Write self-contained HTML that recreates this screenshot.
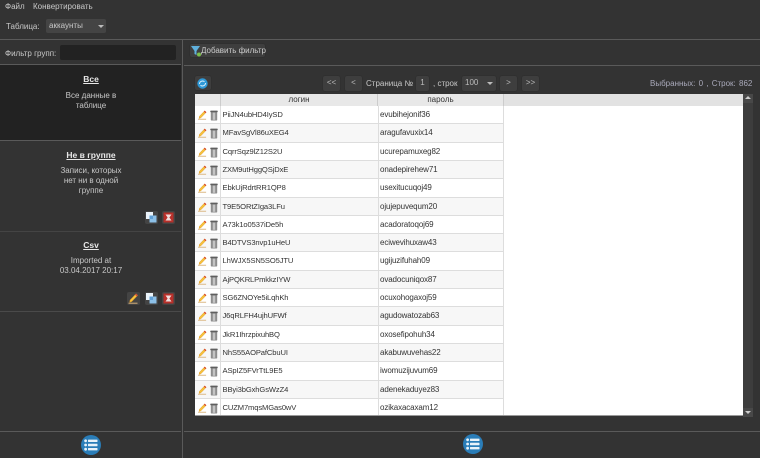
<!DOCTYPE html>
<html><head><meta charset="utf-8"><style>
html,body{margin:0;padding:0;background:#333;}
body{width:760px;height:458px;overflow:hidden;position:relative;font:8px/11px "Liberation Sans",sans-serif;color:#c8c8c8;}
.a{position:absolute;white-space:nowrap;}
.l{position:absolute;background:#5a5a5a;}
.btn{position:absolute;background:#3e3e3e;border-radius:2px;box-shadow:0 0 1px #222;text-align:center;color:#bbb;line-height:15px;height:15px;white-space:nowrap;}
.ctr{position:absolute;text-align:center;left:0;width:182px;color:#c8c8c8;line-height:10px;}
.t{font-weight:bold;text-decoration:underline;color:#e8e8e8;font-size:8.5px;}
.ib{position:absolute;width:13px;height:13px;background:#444;border-radius:2px;}
.ib svg{position:absolute;left:1px;top:1px;}
#tb{position:absolute;left:195px;top:94px;width:548px;height:322px;background:#fff;overflow:hidden;border-bottom:1px solid #999;box-sizing:border-box;}
#hd{position:absolute;left:0;top:0;width:548px;height:12px;background:#e2e2e2;}
.hc{position:absolute;top:0;height:12px;line-height:12px;text-align:center;color:#333;font-size:8px;border-right:1px solid #ccc;background:#e8e8e8;box-sizing:border-box;}
.r{position:absolute;left:0;width:309px;height:18.33px;border-bottom:1px solid #ddd;box-sizing:border-box;color:#333;font-size:8px;line-height:18px;}
.r:nth-child(even){background:#f7f7f7;}
.r i{position:absolute;top:0;bottom:0;width:1px;background:#ddd;}
.r span{position:absolute;top:0;letter-spacing:-.12px;}
.r span:first-of-type{left:27.5px!important;font-size:7.6px;letter-spacing:-.12px;}
.r svg{position:absolute;top:4px;}
</style></head><body>
<svg width="0" height="0" style="position:absolute"><defs>
<symbol id="pen" viewBox="0 0 10 11"><path d="M7.5 .8 9.2 2.4 3.2 8.6 1.2 9.2 1.6 7Z" fill="#f7c23c" stroke="#d9931f" stroke-width=".5"/><path d="M7.5 .8 9.2 2.4 8.2 3.4 6.5 1.8Z" fill="#d9453a"/><rect x="0" y="9.7" width="9" height="1" fill="#d8b27a"/></symbol>
<symbol id="bin" viewBox="0 0 8 11"><rect x=".8" y="1.8" width="6.4" height="8.7" rx=".8" fill="#8d8d8d"/><rect x="2.8" y="2.6" width="2.4" height="7.2" fill="#c4c4c4"/><rect x=".3" y=".6" width="7.4" height="1.6" rx=".6" fill="#5f5f5f"/></symbol>
<symbol id="cp" viewBox="0 0 11 11"><rect x="3.5" y="3.5" width="7" height="7" fill="#8cc0e8"/><rect x="0" y="0" width="7" height="7" fill="#eaf3fa"/><rect x="3.5" y="3.5" width="3.5" height="3.5" fill="#5f9fd6"/></symbol>
<symbol id="x" viewBox="0 0 11 11"><rect x=".5" y=".5" width="10" height="10" fill="#b8302a"/><path d="M2.5 2.5h6L6.4 5.5 8.5 8.5h-6L4.6 5.5Z" fill="#f0dede"/></symbol>
<symbol id="list" viewBox="0 0 20 20"><circle cx="10" cy="10" r="10" fill="#2a7db8"/><g fill="#e8f2f9"><circle cx="4.6" cy="5.8" r="1.4"/><circle cx="4.6" cy="10" r="1.4"/><circle cx="4.6" cy="14.2" r="1.4"/><rect x="7" y="4.6" width="9.5" height="2.4" rx=".5"/><rect x="7" y="8.8" width="9.5" height="2.4" rx=".5"/><rect x="7" y="13" width="9.5" height="2.4" rx=".5"/></g></symbol>
</defs></svg>

<div class="a" style="left:5px;top:1px">Файл</div>
<div class="a" style="left:33px;top:1px">Конвертировать</div>
<div class="a" style="left:6px;top:21px">Таблица:</div>
<div class="a" style="left:46px;top:19px;width:60px;height:14px;background:#444;border-radius:2px;line-height:14px;text-indent:3px">аккаунты<div class="a" style="left:52px;top:6px;border:3px solid transparent;border-top:3px solid #bbb;"></div></div>

<div class="l" style="left:0;top:39px;width:760px;height:1px"></div>
<div class="l" style="left:182px;top:39px;width:1px;height:419px"></div>
<div class="l" style="left:0;top:64px;width:181px;height:1px"></div>
<div class="l" style="left:184px;top:65px;width:576px;height:1px"></div>

<div class="a" style="left:5px;top:48px">Фильтр групп:</div>
<div class="a" style="left:60px;top:45px;width:116px;height:15px;background:#222;border-radius:2px"></div>

<div class="btn" style="left:190px;top:44px;width:75px;text-align:left;height:13px;line-height:13px;color:#ccc"><svg width="11" height="11" viewBox="0 0 11 11" style="position:absolute;left:1px;top:2px"><path d="M0 0h9L5.5 5v4L3.5 8V5Z" fill="#5fb0dc"/><circle cx="8" cy="8.5" r="2" fill="#7cc04a"/></svg><span style="position:absolute;left:11px;white-space:nowrap">Добавить фильтр</span></div>

<div class="a" style="left:0;top:65px;width:181px;height:75px;background:#222"></div>
<div class="l" style="left:0;top:140px;width:181px;height:1px"></div>
<div class="ctr" style="top:74px"><span class="t">Все</span></div>
<div class="ctr" style="top:91px;">Все данные в<br>таблице</div>

<div class="ctr" style="top:150px"><span class="t">Не в группе</span></div>
<div class="ctr" style="top:166px">Записи, которых<br>нет ни в одной<br>группе</div>
<div class="ib" style="left:145px;top:211px"><svg width="11" height="11"><use href="#cp"/></svg></div>
<div class="ib" style="left:162px;top:211px"><svg width="11" height="11"><use href="#x"/></svg></div>
<div class="l" style="left:0;top:231px;width:181px;height:1px;background:#444"></div>

<div class="ctr" style="top:240px"><span class="t">Csv</span></div>
<div class="ctr" style="top:256px">Imported at<br>03.04.2017 20:17</div>
<div class="ib" style="left:127px;top:292px"><svg width="11" height="11"><use href="#pen"/></svg></div>
<div class="ib" style="left:145px;top:292px"><svg width="11" height="11"><use href="#cp"/></svg></div>
<div class="ib" style="left:162px;top:292px"><svg width="11" height="11"><use href="#x"/></svg></div>
<div class="l" style="left:0;top:311px;width:181px;height:1px;background:#4a4a4a"></div>

<div class="btn" style="left:195px;top:76px;width:16px;height:14px"><svg width="11" height="11" viewBox="0 0 11 11" style="position:absolute;left:2px;top:2px"><circle cx="5.5" cy="5.5" r="5.2" fill="#2f9ad8"/><path d="M2.5 6a3 3 0 0 1 5-2.2M8.5 5a3 3 0 0 1-5 2.2" stroke="#dff1fb" fill="none" stroke-width="1"/></svg></div>
<div class="btn" style="left:323px;top:76px;width:17px;line-height:14px">&lt;&lt;</div>
<div class="btn" style="left:345px;top:76px;width:17px;line-height:14px">&lt;</div>
<div class="a" style="left:366px;top:78px">Страница №</div>
<div class="btn" style="left:416px;top:76px;width:13px;line-height:14px">1</div>
<div class="a" style="left:433px;top:78px">, строк</div>
<div class="btn" style="left:462px;top:76px;width:34px;text-align:left;line-height:14px;text-indent:3px">100<div class="a" style="left:25px;top:6px;border:3px solid transparent;border-top:3px solid #bbb;"></div></div>
<div class="btn" style="left:500px;top:76px;width:17px;line-height:14px">&gt;</div>
<div class="btn" style="left:522px;top:76px;width:17px;line-height:14px">&gt;&gt;</div>
<div class="a" style="left:650px;top:78px;color:#aab;word-spacing:1px">Выбранных: 0 , Строк: 862</div>

<div id="tb">
<div id="hd"></div>
<div class="hc" style="left:0;width:26px"></div>
<div class="hc" style="left:26px;width:157px">логин</div>
<div class="hc" style="left:183px;width:126px">пароль</div>
<div style="position:absolute;left:0;top:12px;width:309px;height:310px">
<div class="r" style="top:0px"><svg style="left:3px" width="9" height="10"><use href="#pen"/></svg><svg style="left:15px" width="8" height="11"><use href="#bin"/></svg><i style="left:25px"></i><span style="left:28px">PiiJN4ubHD4IySD</span><i style="left:183px"></i><span style="left:185px">evubihejonif36</span><i style="left:308px"></i></div>
<div class="r" style="top:18.3px"><svg style="left:3px" width="9" height="10"><use href="#pen"/></svg><svg style="left:15px" width="8" height="11"><use href="#bin"/></svg><i style="left:25px"></i><span style="left:28px">MFavSgVl86uXEG4</span><i style="left:183px"></i><span style="left:185px">aragufavuxix14</span><i style="left:308px"></i></div>
<div class="r" style="top:36.6px"><svg style="left:3px" width="9" height="10"><use href="#pen"/></svg><svg style="left:15px" width="8" height="11"><use href="#bin"/></svg><i style="left:25px"></i><span style="left:28px">CqrrSqz9lZ12S2U</span><i style="left:183px"></i><span style="left:185px">ucurepamuxeg82</span><i style="left:308px"></i></div>
<div class="r" style="top:54.9px"><svg style="left:3px" width="9" height="10"><use href="#pen"/></svg><svg style="left:15px" width="8" height="11"><use href="#bin"/></svg><i style="left:25px"></i><span style="left:28px">ZXM9utHggQSjDxE</span><i style="left:183px"></i><span style="left:185px">onadepirehew71</span><i style="left:308px"></i></div>
<div class="r" style="top:73.2px"><svg style="left:3px" width="9" height="10"><use href="#pen"/></svg><svg style="left:15px" width="8" height="11"><use href="#bin"/></svg><i style="left:25px"></i><span style="left:28px">EbkUjRdrtRR1QP8</span><i style="left:183px"></i><span style="left:185px">usexitucuqoj49</span><i style="left:308px"></i></div>
<div class="r" style="top:91.5px"><svg style="left:3px" width="9" height="10"><use href="#pen"/></svg><svg style="left:15px" width="8" height="11"><use href="#bin"/></svg><i style="left:25px"></i><span style="left:28px">T9E5ORtZIga3LFu</span><i style="left:183px"></i><span style="left:185px">ojujepuvequm20</span><i style="left:308px"></i></div>
<div class="r" style="top:109.8px"><svg style="left:3px" width="9" height="10"><use href="#pen"/></svg><svg style="left:15px" width="8" height="11"><use href="#bin"/></svg><i style="left:25px"></i><span style="left:28px">A73k1o0537iDe5h</span><i style="left:183px"></i><span style="left:185px">acadoratoqoj69</span><i style="left:308px"></i></div>
<div class="r" style="top:128.1px"><svg style="left:3px" width="9" height="10"><use href="#pen"/></svg><svg style="left:15px" width="8" height="11"><use href="#bin"/></svg><i style="left:25px"></i><span style="left:28px">B4DTVS3nvp1uHeU</span><i style="left:183px"></i><span style="left:185px">eciwevihuxaw43</span><i style="left:308px"></i></div>
<div class="r" style="top:146.4px"><svg style="left:3px" width="9" height="10"><use href="#pen"/></svg><svg style="left:15px" width="8" height="11"><use href="#bin"/></svg><i style="left:25px"></i><span style="left:28px">LhWJX5SN5SO5JTU</span><i style="left:183px"></i><span style="left:185px">ugijuzifuhah09</span><i style="left:308px"></i></div>
<div class="r" style="top:164.7px"><svg style="left:3px" width="9" height="10"><use href="#pen"/></svg><svg style="left:15px" width="8" height="11"><use href="#bin"/></svg><i style="left:25px"></i><span style="left:28px">AjPQKRLPmkkzIYW</span><i style="left:183px"></i><span style="left:185px">ovadocuniqox87</span><i style="left:308px"></i></div>
<div class="r" style="top:183px"><svg style="left:3px" width="9" height="10"><use href="#pen"/></svg><svg style="left:15px" width="8" height="11"><use href="#bin"/></svg><i style="left:25px"></i><span style="left:28px">SG6ZNOYe5iLqhKh</span><i style="left:183px"></i><span style="left:185px">ocuxohogaxoj59</span><i style="left:308px"></i></div>
<div class="r" style="top:201.3px"><svg style="left:3px" width="9" height="10"><use href="#pen"/></svg><svg style="left:15px" width="8" height="11"><use href="#bin"/></svg><i style="left:25px"></i><span style="left:28px">J6qRLFH4ujhUFWf</span><i style="left:183px"></i><span style="left:185px">agudowatozab63</span><i style="left:308px"></i></div>
<div class="r" style="top:219.6px"><svg style="left:3px" width="9" height="10"><use href="#pen"/></svg><svg style="left:15px" width="8" height="11"><use href="#bin"/></svg><i style="left:25px"></i><span style="left:28px">JkR1IhrzpixuhBQ</span><i style="left:183px"></i><span style="left:185px">oxosefipohuh34</span><i style="left:308px"></i></div>
<div class="r" style="top:237.9px"><svg style="left:3px" width="9" height="10"><use href="#pen"/></svg><svg style="left:15px" width="8" height="11"><use href="#bin"/></svg><i style="left:25px"></i><span style="left:28px">NhS55AOPafCbuUI</span><i style="left:183px"></i><span style="left:185px">akabuwuvehas22</span><i style="left:308px"></i></div>
<div class="r" style="top:256.2px"><svg style="left:3px" width="9" height="10"><use href="#pen"/></svg><svg style="left:15px" width="8" height="11"><use href="#bin"/></svg><i style="left:25px"></i><span style="left:28px">ASpIZ5FVrTtL9E5</span><i style="left:183px"></i><span style="left:185px">iwomuzijuvum69</span><i style="left:308px"></i></div>
<div class="r" style="top:274.5px"><svg style="left:3px" width="9" height="10"><use href="#pen"/></svg><svg style="left:15px" width="8" height="11"><use href="#bin"/></svg><i style="left:25px"></i><span style="left:28px">BByi3bGxhGsWzZ4</span><i style="left:183px"></i><span style="left:185px">adenekaduyez83</span><i style="left:308px"></i></div>
<div class="r" style="top:292.8px"><svg style="left:3px" width="9" height="10"><use href="#pen"/></svg><svg style="left:15px" width="8" height="11"><use href="#bin"/></svg><i style="left:25px"></i><span style="left:28px">CUZM7mqsMGas0wV</span><i style="left:183px"></i><span style="left:185px">ozikaxacaxam12</span><i style="left:308px"></i></div>
</div>
</div>

<div class="a" style="left:743px;top:94px;width:10px;height:322px;background:#3d3d3d"></div>
<div class="a" style="left:743px;top:94px;width:10px;height:9px;background:#484848"></div>
<div class="a" style="left:745px;top:96px;border:3px solid transparent;border-bottom:3px solid #ccc;border-top:0"></div>
<div class="a" style="left:743px;top:408px;width:10px;height:9px;background:#484848"></div>
<div class="a" style="left:745px;top:411px;border:3px solid transparent;border-top:3px solid #ccc;border-bottom:0"></div>

<div class="l" style="left:0;top:431px;width:181px;height:1px"></div>
<div class="l" style="left:184px;top:431px;width:576px;height:1px"></div>
<svg class="a" style="left:81px;top:435px" width="20" height="20"><use href="#list"/></svg>
<svg class="a" style="left:463px;top:434px" width="20" height="20"><use href="#list"/></svg>
</body></html>
